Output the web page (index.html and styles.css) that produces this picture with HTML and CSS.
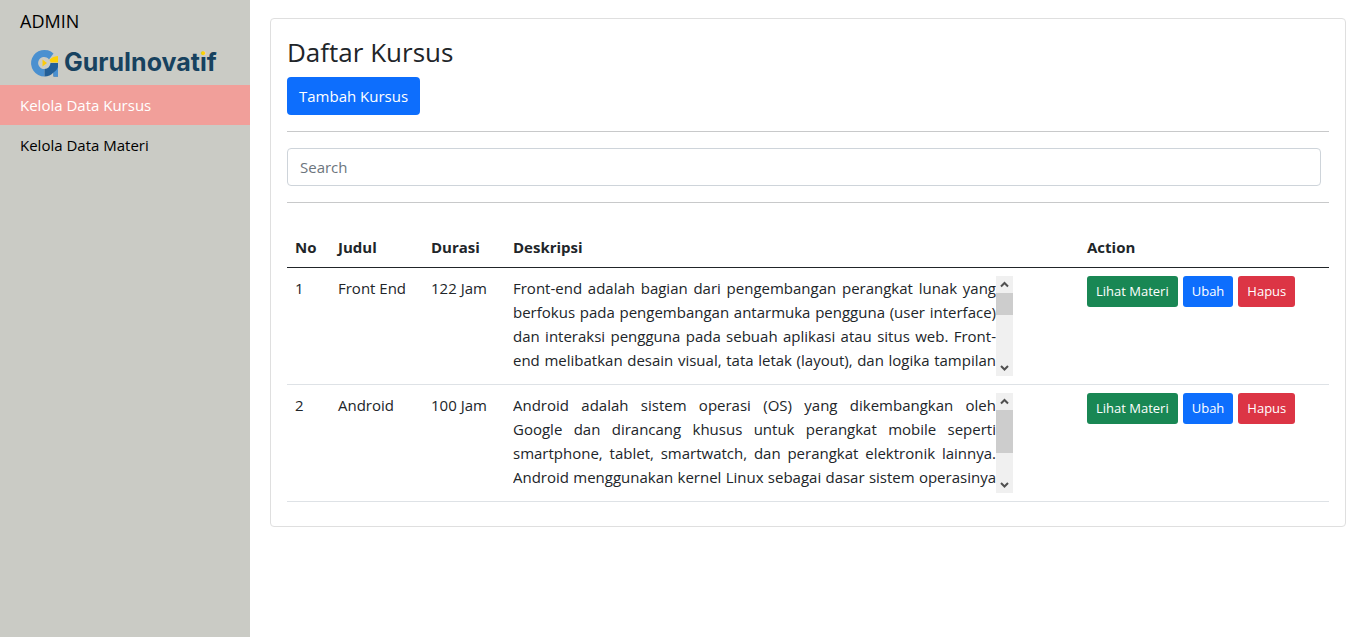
FILE: index.html
```html
<!DOCTYPE html>
<html lang="id">
<head>
<meta charset="utf-8">
<meta name="viewport" content="width=device-width, initial-scale=1">
<title>Daftar Kursus</title>
<link rel="stylesheet" href="styles.css">
</head>
<body>
<div class="layout">
  <aside class="sidebar">
    <div class="sidebar-title">ADMIN</div>
    <svg class="logo" viewBox="0 0 200 34" role="img" aria-label="GuruInovatif">
      <defs>
        <linearGradient id="dot" gradientUnits="userSpaceOnUse" x1="0" y1="0" x2="0" y2="17">
          <stop offset="0.5" stop-color="#fdd106"/>
          <stop offset="0.5" stop-color="#17425f"/>
        </linearGradient>
      </defs>
      <path d="M23.500 5.500A13.300 13.300 0 1 0 14.500 28.500V21A6 6 0 1 1 19 11.500Z" fill="#4a90d0"/>
      <path d="M14.500 28.500V21Q20 20.500 20.500 15H28V28.500H23.500V24.500Q20 28.500 14.500 28.500Z" fill="#235f97"/>
      <path d="M23.500 24.500V28.500H28V19Q27 22.500 23.500 24.500Z" fill="#4a90d0"/>
      <path d="M12.500 11.500L17 15L12.500 18.500Z" fill="#fccb0a"/>
      <path d="M20.500 14.500Q20.500 13 19.500 12Q22 8.500 28 8V14.500Z" fill="#fdd106"/>
      <text class="logo-text" x="34" y="23">GuruInovat<tspan fill="url(#dot)">i</tspan>f</text>
    </svg>
    <nav class="menu">
      <a class="menu-link active" href="#kursus">Kelola Data Kursus</a>
      <a class="menu-link" href="#materi">Kelola Data Materi</a>
    </nav>
  </aside>
  <main class="content">
    <section class="card">
      <h1 class="card-title">Daftar Kursus</h1>
      <button class="btn btn-primary" type="button">Tambah Kursus</button>
      <hr class="divider">
      <form class="search"><input class="search-input" type="search" placeholder="Search" aria-label="Search"></form>
      <hr class="divider">
      <table class="table">
        <colgroup><col class="col-no"><col class="col-title"><col class="col-time"><col><col class="col-action"></colgroup>
        <thead>
          <tr><th>No</th><th>Judul</th><th>Durasi</th><th>Deskripsi</th><th>Action</th></tr>
        </thead>
        <tbody>
          <tr>
            <td>1</td><td>Front End</td><td>122 Jam</td>
            <td>
              <div class="desc">
                <p class="desc-text"><span>Front-end adalah bagian dari pengembangan perangkat lunak yang</span> <span>berfokus pada pengembangan antarmuka pengguna (user interface)</span> <span>dan interaksi pengguna pada sebuah aplikasi atau situs web. Front-</span><span>end melibatkan desain visual, tata letak (layout), dan logika tampilan</span></p>
                <div class="scrollbar" aria-hidden="true">
                  <svg class="arrow" viewBox="0 0 17 17"><path d="M5 10.500L8.500 7L12 10.500"/></svg>
                  <div class="track"><div class="thumb" style="height:33%"></div></div>
                  <svg class="arrow" viewBox="0 0 17 17"><path d="M5 7L8.500 10.500L12 7"/></svg>
                </div>
              </div>
            </td>
            <td>
              <div class="actions">
                <button class="btn btn-sm btn-success" type="button">Lihat Materi</button>
                <button class="btn btn-sm btn-primary" type="button">Ubah</button>
                <button class="btn btn-sm btn-danger" type="button">Hapus</button>
              </div>
            </td>
          </tr>
          <tr>
            <td>2</td><td>Android</td><td>100 Jam</td>
            <td>
              <div class="desc">
                <p class="desc-text"><span>Android adalah sistem operasi (OS) yang dikembangkan oleh</span> <span>Google dan dirancang khusus untuk perangkat mobile seperti</span> <span>smartphone, tablet, smartwatch, dan perangkat elektronik lainnya.</span> <span>Android menggunakan kernel Linux sebagai dasar sistem operasinya</span></p>
                <div class="scrollbar" aria-hidden="true">
                  <svg class="arrow" viewBox="0 0 17 17"><path d="M5 10.500L8.500 7L12 10.500"/></svg>
                  <div class="track"><div class="thumb" style="height:65%"></div></div>
                  <svg class="arrow" viewBox="0 0 17 17"><path d="M5 7L8.500 10.500L12 7"/></svg>
                </div>
              </div>
            </td>
            <td>
              <div class="actions">
                <button class="btn btn-sm btn-success" type="button">Lihat Materi</button>
                <button class="btn btn-sm btn-primary" type="button">Ubah</button>
                <button class="btn btn-sm btn-danger" type="button">Hapus</button>
              </div>
            </td>
          </tr>
        </tbody>
      </table>
    </section>
  </main>
</div>
</body>
</html>
```
FILE: styles.css
```css
*, *::before, *::after { box-sizing: border-box; }
body {
  margin: 0;
  background: #fff;
  color: #212529;
  font: 15px/24px "Open Sans", "Noto Sans", sans-serif;
}
.layout { display: flex; min-height: 100vh; }

.sidebar { flex: 0 0 250px; background: #cacbc5; color: #000; }
.sidebar-title { padding: 8px 20px 0; font-size: 18px; line-height: 27px; }
.logo { display: block; width: 200px; height: 34px; margin: 13px 0 3px 30px; }
.logo-text { font: 700 25px Inter, sans-serif; fill: #17425f; }
.menu { display: flex; flex-direction: column; }
.menu-link { padding: 8px 20px; color: #000; text-decoration: none; }
.menu-link.active { background: #f19f9a; color: #fff; }

.content { flex: 1; min-width: 0; padding: 18px 19px 18px 20px; }
.card { padding: 16px 16px 24px; border: 1px solid #dfdfdf; border-radius: 4px; }
.card-title { margin: 0 0 8px; font-size: 26px; font-weight: 400; line-height: 34px; }
.divider { height: 1px; margin: 16px 0; border: 0; background: #c8c9ca; }

.btn {
  display: block;
  padding: 6px 11px;
  border: 1px solid transparent;
  border-radius: 4px;
  color: #fff;
  font: inherit;
  white-space: nowrap;
}
.btn-sm { padding: 4px 8px; border-radius: 3px; font-size: 13px; line-height: 21px; }
.btn-primary { background: #0d6efd; }
.btn-success { background: #198754; }
.btn-danger { background: #dc3545; }

.search { padding-right: 8px; }
.search-input {
  display: block;
  width: 100%;
  height: 38px;
  padding: 6px 12px;
  border: 1px solid #ced4da;
  border-radius: 4px;
  appearance: none;
  color: inherit;
  font: inherit;
}
.search-input::placeholder { color: #6c757d; opacity: 1; }

.table { width: 100%; margin-top: 24px; border-collapse: collapse; table-layout: fixed; }
.col-no { width: 43px; }
.col-title { width: 93px; }
.col-time { width: 82px; }
.col-action { width: 250px; }
.table th, .table td { padding: 8px; border-bottom: 1px solid #dee2e6; text-align: left; vertical-align: top; }
.table th { border-bottom-color: #212529; font-weight: 700; }

.desc { display: flex; max-width: 500px; height: 100px; overflow: hidden; }
.desc-text { flex: 1; margin: 0; }
.desc-text span { display: block; text-align: justify; text-align-last: justify; }
.scrollbar { display: flex; flex: 0 0 17px; flex-direction: column; background: #f0f0f0; }
.arrow { width: 17px; height: 17px; fill: none; stroke: #505050; stroke-width: 2; }
.track { flex: 1; }
.thumb { background: #cdcdcd; }
.actions { display: flex; gap: 5px; }
```
